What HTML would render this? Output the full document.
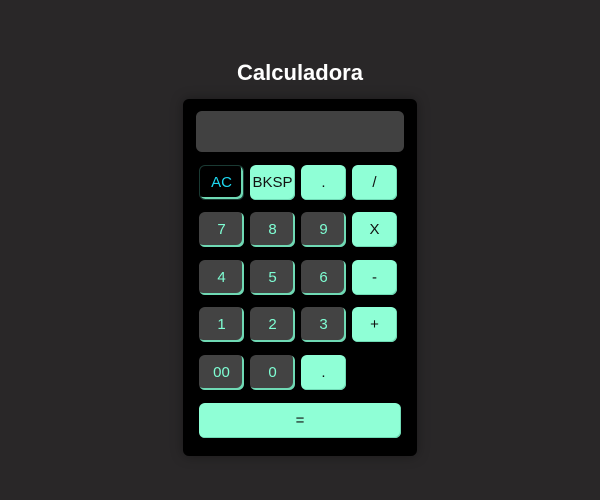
<!DOCTYPE html>
<html><head><style>
*{box-sizing:border-box;margin:0;padding:0}
body{width:600px;height:500px;background:#292728;font-family:"Liberation Sans",sans-serif;position:relative;overflow:hidden}
h1{position:absolute;top:60px;left:0;width:600px;text-align:center;color:#fff;font-size:22px;font-weight:bold}
.calc{position:absolute;left:183px;top:99px;width:234px;height:357px;background:#000;border-radius:6px;box-shadow:0 0 12px rgba(0,0,0,.35)}
.disp{position:absolute;left:13px;top:12px;width:208px;height:41px;background:#414141;border-radius:6px}
.b{position:absolute;width:45px;height:35px;border-radius:6px;display:flex;align-items:center;justify-content:center;font-size:15px}
.d{background:#434343;color:#7fffd4;box-shadow:inset -2px -2px 0 #6fd9b4}
.l{background:#8fffd6;color:#111;box-shadow:inset -1px -1px 0 #6fd9b4}
.ac{background:#000;color:#1ed8f0;box-shadow:inset -2px -2px 0 #6fd9b4;border:1px solid #1a3a33}
</style></head><body>
<h1>Calculadora</h1>
<div class="calc">
<div class="disp"></div>
<div class="b ac" style="left:16px;top:66px">AC</div>
<div class="b l" style="left:67px;top:66px">BKSP</div>
<div class="b l" style="left:118px;top:66px">.</div>
<div class="b l" style="left:169px;top:66px">/</div>
<div class="b d" style="left:16px;top:113px">7</div>
<div class="b d" style="left:67px;top:113px">8</div>
<div class="b d" style="left:118px;top:113px">9</div>
<div class="b l" style="left:169px;top:113px">X</div>
<div class="b d" style="left:16px;top:161px">4</div>
<div class="b d" style="left:67px;top:161px">5</div>
<div class="b d" style="left:118px;top:161px">6</div>
<div class="b l" style="left:169px;top:161px">-</div>
<div class="b d" style="left:16px;top:208px">1</div>
<div class="b d" style="left:67px;top:208px">2</div>
<div class="b d" style="left:118px;top:208px">3</div>
<div class="b l" style="left:169px;top:208px">+</div>
<div class="b d" style="left:16px;top:256px">00</div>
<div class="b d" style="left:67px;top:256px">0</div>
<div class="b l" style="left:118px;top:256px">.</div>
<div class="b l" style="left:16px;top:304px;width:202px">=</div>
</div>
</body></html>
